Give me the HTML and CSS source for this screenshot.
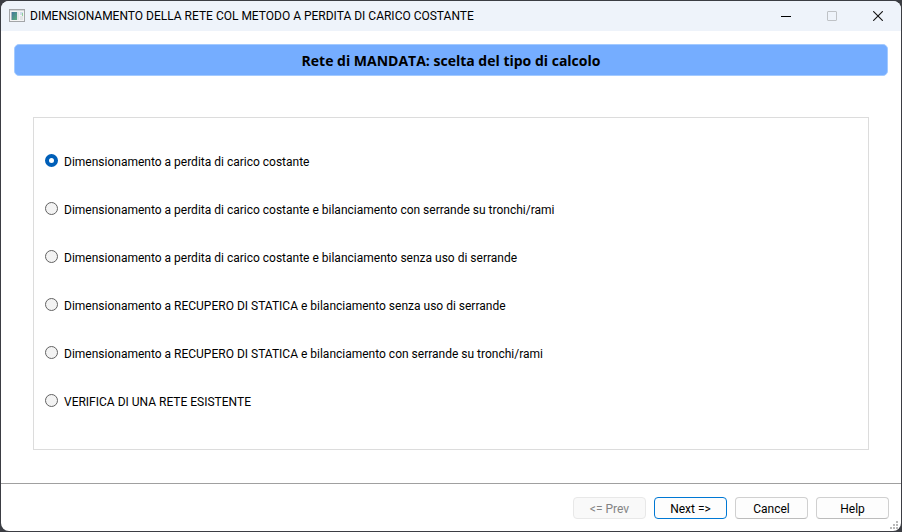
FILE: index.html
```html
<!DOCTYPE html>
<html lang="it">
<head>
<meta charset="utf-8">
<title>DIMENSIONAMENTO DELLA RETE COL METODO A PERDITA DI CARICO COSTANTE</title>
<link rel="stylesheet" href="styles.css">
</head>
<body>
<form class="window">
  <header class="titlebar">
    <svg class="app-icon" width="16" height="14" viewBox="0 0 16 14" aria-hidden="true">
      <defs>
        <linearGradient id="pane" x1="0" y1="0" x2="1" y2="1">
          <stop offset="0" stop-color="#40739c"/>
          <stop offset="1" stop-color="#5fae7c"/>
        </linearGradient>
      </defs>
      <rect x="0.5" y="0.5" width="15" height="12" fill="#f4f4f4" stroke="#a3a5a8"/>
      <rect x="1" y="1" width="14" height="1" fill="#d4d6d8"/>
      <rect x="2" y="3" width="6" height="8" fill="url(#pane)"/>
      <rect x="2" y="3" width="1" height="8" fill="#a9b6c0"/>
      <rect x="8" y="3" width="2" height="8" fill="#e4e6e8"/>
      <rect x="11" y="3" width="3" height="3" fill="#cfdcea"/>
      <rect x="13" y="4" width="1" height="3" fill="#8fcf9c"/>
      <rect x="11" y="7" width="3" height="4" fill="#e2e4e6"/>
    </svg>
    <h1 class="title">DIMENSIONAMENTO DELLA RETE COL METODO A PERDITA DI CARICO COSTANTE</h1>
    <div class="controls">
      <button type="button" class="control" aria-label="Riduci a icona"><svg width="10" height="10" viewBox="0 0 10 10"><path d="M0 5.5H10" stroke="#000"/></svg></button>
      <button type="button" class="control" aria-label="Ingrandisci" disabled><svg width="10" height="10" viewBox="0 0 10 10"><rect x="0.5" y="0.5" width="9" height="9" rx="0.5" fill="none" stroke="#bfc2c6"/></svg></button>
      <button type="button" class="control" aria-label="Chiudi"><svg width="10" height="10" viewBox="0 0 10 10"><path d="M0.2 0.2L9.8 9.8M9.8 0.2L0.2 9.8" stroke="#111" stroke-width="1.1"/></svg></button>
    </div>
  </header>
  <main class="content">
    <h2 class="banner">Rete di MANDATA: scelta del tipo di calcolo</h2>
    <div class="options" role="radiogroup" aria-label="Tipo di calcolo">
      <label class="option"><input type="radio" name="calcolo" checked><span>Dimensionamento a perdita di carico costante</span></label>
      <label class="option"><input type="radio" name="calcolo"><span>Dimensionamento a perdita di carico costante e bilanciamento con serrande su tronchi/rami</span></label>
      <label class="option"><input type="radio" name="calcolo"><span>Dimensionamento a perdita di carico costante e bilanciamento senza uso di serrande</span></label>
      <label class="option"><input type="radio" name="calcolo"><span>Dimensionamento a RECUPERO DI STATICA e bilanciamento senza uso di serrande</span></label>
      <label class="option"><input type="radio" name="calcolo"><span>Dimensionamento a RECUPERO DI STATICA e bilanciamento con serrande su tronchi/rami</span></label>
      <label class="option"><input type="radio" name="calcolo"><span>VERIFICA DI UNA RETE ESISTENTE</span></label>
    </div>
  </main>
  <footer class="footer">
    <button type="button" class="button" disabled>&lt;= Prev</button>
    <button type="button" class="button primary">Next =&gt;</button>
    <button type="button" class="button">Cancel</button>
    <button type="button" class="button">Help</button>
    <svg class="grip" width="8" height="8" viewBox="0 0 8 8" fill="#b8b8b8" aria-hidden="true">
      <path d="M6 0h2v2h-2zM3 3h2v2h-2zM6 3h2v2h-2zM0 6h2v2h-2zM3 6h2v2h-2zM6 6h2v2h-2z"/>
    </svg>
  </footer>
</form>
</body>
</html>
```
FILE: styles.css
```css
* {
  box-sizing: border-box;
}

body {
  margin: 0;
  padding: 1px;
  min-height: 100vh;
  display: flex;
  background: #3b3d43;
  color: #000;
  font: 12px/16px "Segoe UI", Roboto, "Open Sans", sans-serif;
}

.window {
  flex: 1;
  display: flex;
  flex-direction: column;
  overflow: hidden;
  border-radius: 8px;
  background: #fff;
}

.titlebar {
  display: flex;
  align-items: center;
  height: 30px;
  padding-left: 8px;
  background: #eef3fa;
}

.title {
  margin: 0 auto 0 5px;
  font-size: 12px;
  font-weight: 400;
  white-space: nowrap;
}

.controls {
  display: flex;
  align-self: stretch;
}

.control {
  display: grid;
  place-items: center;
  width: 46px;
  padding: 0;
  border: 0;
  background: none;
}

.content {
  flex: 1;
  display: flex;
  flex-direction: column;
  padding: 13px 13px 33px;
}

.banner {
  margin: 0 0 41px;
  padding: 6px 5px 4px;
  border: 1px solid #a3caff;
  border-radius: 5px;
  background: #75adff;
  font-family: "Segoe UI", "Open Sans", "Noto Sans", sans-serif;
  font-size: 14px;
  font-weight: 700;
  line-height: 20px;
  text-align: center;
}

.options {
  flex: 1;
  display: flex;
  flex-direction: column;
  gap: 32px;
  margin: 0 19px;
  padding: 36px 11px 34px;
  border: 1px solid #dcdcdc;
}

.option {
  display: flex;
  gap: 6px;
}

.option input {
  appearance: none;
  flex: none;
  width: 13px;
  height: 13px;
  margin: 0;
  border: 1px solid #626262;
  border-radius: 50%;
  background: #f3f3f3;
}

.option input:checked {
  border: 4px solid #005fb8;
  background: #fff;
}

.footer {
  position: relative;
  display: flex;
  justify-content: flex-end;
  gap: 8px;
  padding: 13px 12px 12px;
  border-top: 1px solid #a0a0a0;
}

.button {
  width: 73px;
  height: 22px;
  padding: 2px 0 0;
  border: 1px solid #d0d0d0;
  border-bottom-color: #bcbcbc;
  border-radius: 4px;
  background: #fdfdfd;
  color: #000;
  font: inherit;
}

.button:disabled {
  border-color: #e8e8e8;
  background: #f9f9f9;
  color: #838383;
}

.primary {
  border-color: #0078d4;
}

.grip {
  position: absolute;
  right: 3px;
  bottom: 2px;
}
```
